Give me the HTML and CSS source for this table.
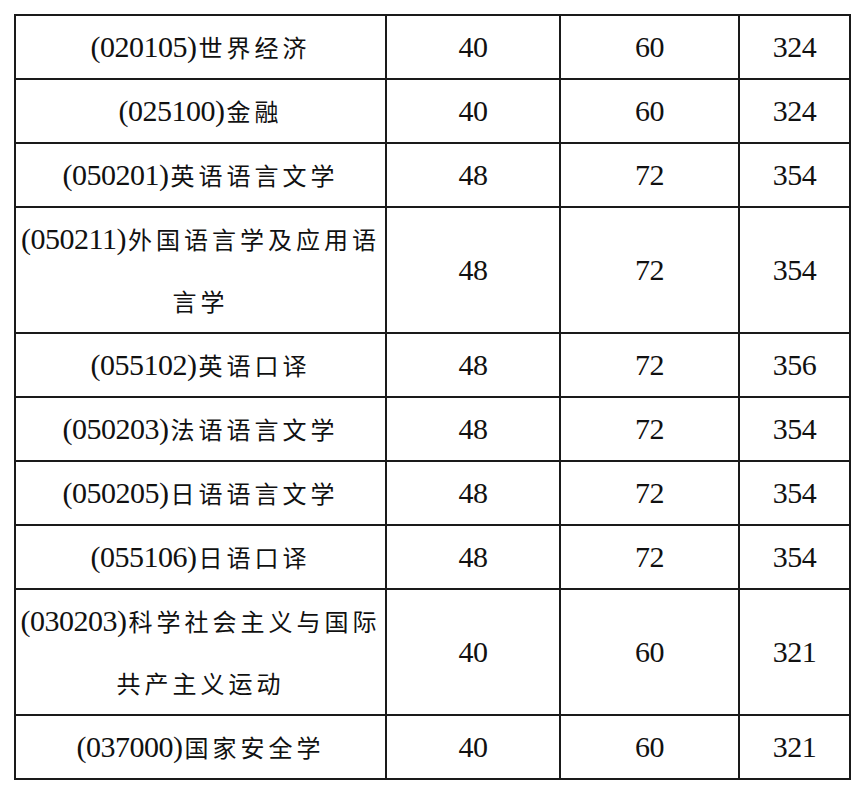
FILE: index.html
```html
<!DOCTYPE html>
<html lang="zh">
<head>
<meta charset="utf-8">
<link rel="stylesheet" href="styles.css">
</head>
<body>
<div class="page">
<table class="scores">
  <colgroup>
    <col class="c1"><col class="c2"><col class="c3"><col class="c4">
  </colgroup>
  <tr><td class="name"><span class="num">(020105)</span>世界经济</td><td>40</td><td>60</td><td>324</td></tr>
  <tr><td class="name"><span class="num">(025100)</span>金融</td><td>40</td><td>60</td><td>324</td></tr>
  <tr><td class="name"><span class="num">(050201)</span>英语语言文学</td><td>48</td><td>72</td><td>354</td></tr>
  <tr class="tall"><td class="name"><span class="num">(050211)</span>外国语言学及应用语<br>言学</td><td>48</td><td>72</td><td>354</td></tr>
  <tr><td class="name"><span class="num">(055102)</span>英语口译</td><td>48</td><td>72</td><td>356</td></tr>
  <tr><td class="name"><span class="num">(050203)</span>法语语言文学</td><td>48</td><td>72</td><td>354</td></tr>
  <tr><td class="name"><span class="num">(050205)</span>日语语言文学</td><td>48</td><td>72</td><td>354</td></tr>
  <tr><td class="name"><span class="num">(055106)</span>日语口译</td><td>48</td><td>72</td><td>354</td></tr>
  <tr class="tall"><td class="name"><span class="num">(030203)</span>科学社会主义与国际<br>共产主义运动</td><td>40</td><td>60</td><td>321</td></tr>
  <tr><td class="name"><span class="num">(037000)</span>国家安全学</td><td>40</td><td>60</td><td>321</td></tr>
</table>
</div>
</body>
</html>
```

FILE: styles.css
```css
html, body {
  margin: 0;
  padding: 0;
  background: #fff;
}
.page {
  padding: 14px 0 0 14px;
}
.scores {
  border-collapse: collapse;
  table-layout: fixed;
  width: 835px;
  border: 2px solid #333;
  color: #111;
}
.c1 { width: 371px; }
.c2 { width: 174px; }
.c3 { width: 179px; }
.c4 { width: 111px; }
.scores td {
  border: 2px solid #1a1a1a;
  height: 62px;
  padding: 0;
  text-align: center;
  vertical-align: middle;
  font-family: "Liberation Serif", "Times New Roman", serif;
  font-size: 30px;
  letter-spacing: -0.5px;
  line-height: 60px;
}
.scores td.num-last {
  padding-right: 8px;
}
.scores tr.tall td {
  height: 124px;
}
.scores td.name {
  font-family: "Noto Sans CJK SC", sans-serif;
  font-size: 24px;
  letter-spacing: 4px;
  line-height: 62px;
  padding: 0 2px 0 2px;
}
.num {
  font-family: "Liberation Serif", "Times New Roman", serif;
  font-size: 30px;
  letter-spacing: -0.5px;
  margin-right: 2px;
}
```
